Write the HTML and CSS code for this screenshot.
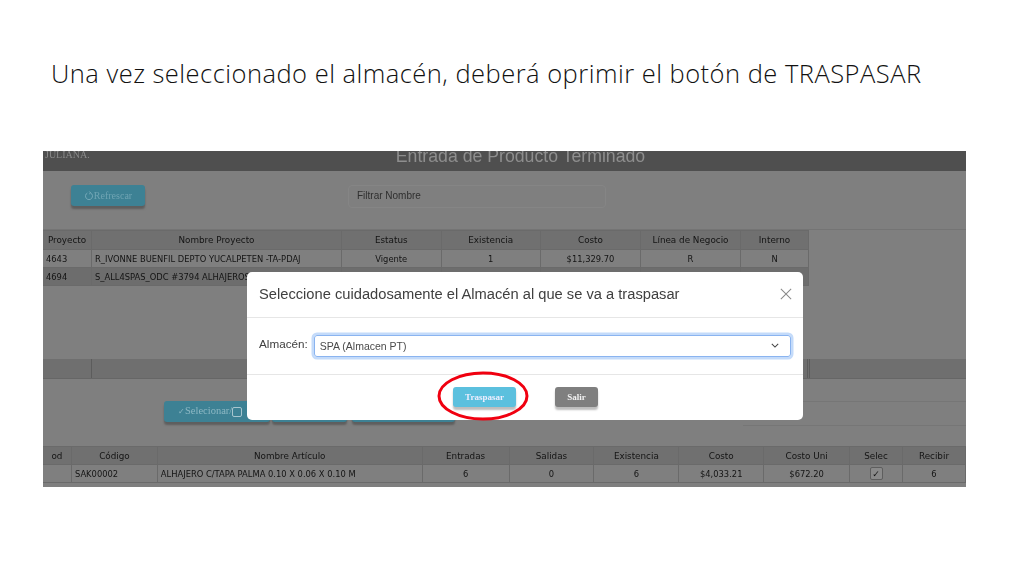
FILE: index.html
```html
<!DOCTYPE html>
<html lang="es">
<head>
<meta charset="utf-8">
<title>Traspasar</title>
<link rel="stylesheet" href="styles.css">
</head>
<body>
<h1 class="slide-title">Una vez seleccionado el almacén, deberá oprimir el botón de TRASPASAR</h1>
<div class="shot">
  <div class="app">
    <header class="app-head">
      <span class="logo">JULIANA.</span>
      <span class="app-title">Entrada de Producto Terminado</span>
    </header>
    <div class="toolbar">
      <span class="btn btn-refresh"><svg class="refresh-icon" viewBox="0 0 12 12"><path d="M8 2.4a4.2 4.2 0 1 1-4 0M6.4 .6L8 2.4 6.2 3.6"/></svg>Refrescar</span>
      <span class="filter">Filtrar Nombre</span>
    </div>
    <table class="grid grid-top">
      <thead>
        <tr><th class="c1">Proyecto</th><th class="c2">Nombre Proyecto</th><th class="c3">Estatus</th><th class="c3">Existencia</th><th class="c4">Costo</th><th class="c4">Línea de Negocio</th><th class="c5">Interno</th></tr>
      </thead>
      <tbody>
        <tr><td>4643</td><td>R_IVONNE BUENFIL DEPTO YUCALPETEN -TA-PDAJ</td><td class="mid">Vigente</td><td class="mid">1</td><td class="mid">$11,329.70</td><td class="mid">R</td><td class="mid">N</td></tr>
        <tr class="picked"><td>4694</td><td>S_ALL4SPAS_ODC #3794 ALHAJEROS</td><td class="mid">Vigente</td><td class="mid">6</td><td class="mid">$4,033.21</td><td class="mid">S</td><td class="mid">N</td></tr>
      </tbody>
    </table>
    <div class="band"><span class="band-a"></span><span class="band-b"></span><span class="band-c"></span></div>
    <div class="actions">
      <span class="btn btn-sel"><span class="tick">✓</span>Selecionar/<span class="box"></span></span>
      <span class="btn btn-alt"></span>
      <span class="btn btn-alt2"></span>
    </div>
    <table class="grid grid-low">
      <thead>
        <tr><th class="d1">od</th><th class="d2">Código</th><th class="d3">Nombre Artículo</th><th class="d4">Entradas</th><th class="d5">Salidas</th><th class="d5">Existencia</th><th class="d5">Costo</th><th class="d6">Costo Uni</th><th class="d7">Selec</th><th class="d8">Recibir</th></tr>
      </thead>
      <tbody>
        <tr><td></td><td>SAK00002</td><td>ALHAJERO C/TAPA PALMA 0.10 X 0.06 X 0.10 M</td><td class="mid">6</td><td class="mid">0</td><td class="mid">6</td><td class="mid">$4,033.21</td><td class="mid">$672.20</td><td class="mid"><span class="check">✓</span></td><td class="mid">6</td></tr>
      </tbody>
    </table>
  </div>
  <div class="modal">
    <div class="modal-head">
      <span class="modal-title">Seleccione cuidadosamente el Almacén al que se va a traspasar</span>
      <svg class="close" viewBox="0 0 14 14"><path d="M1 1l12 12M13 1L1 13"/></svg>
    </div>
    <div class="modal-body">
      <span class="field-label">Almacén:</span>
      <div class="select">
        <span>SPA (Almacen PT)</span>
        <svg class="chev" viewBox="0 0 10 6"><path d="M1 1l4 4 4-4"/></svg>
      </div>
    </div>
    <div class="modal-foot">
      <span class="btn btn-go">Traspasar</span>
      <span class="btn btn-exit">Salir</span>
    </div>
    <svg class="ring" viewBox="0 0 92 50"><ellipse cx="46" cy="25" rx="44" ry="23"/></svg>
  </div>
</div>
</body>
</html>
```
FILE: styles.css
```css
* { box-sizing: border-box; }
html, body { margin: 0; background: #fff; }
body { width: 1024px; height: 576px; overflow: hidden; padding: 55px 0 0 51px; }

.slide-title {
  margin: 0;
  font: 300 25.5px/36px "Open Sans", sans-serif;
  letter-spacing: .48px;
  color: #111;
  white-space: nowrap;
}

.shot {
  position: relative;
  width: 923px;
  height: 336px;
  margin: 60px 0 0 -8px;
  overflow: hidden;
  background: #7f7f7f;
  filter: blur(.4px);
}
.app { font-family: "DejaVu Sans", Verdana, sans-serif; color: #141414; }

.app-head {
  height: 20px;
  background: #4f4f4f;
  display: flex;
  justify-content: center;
  position: relative;
  overflow: hidden;
}
.logo {
  position: absolute;
  left: 2px;
  top: -2px;
  font: 10px/12px "Liberation Serif", serif;
  color: #8a8a8a;
}
.app-title {
  font: 17.7px/20px "Liberation Sans", Arial, sans-serif;
  color: #8e8e8e;
  margin: -5px 0 0 32px;
}

.toolbar {
  height: 59px;
  display: flex;
  align-items: flex-start;
  padding: 14px 0 0 28px;
  border-bottom: 1px solid #747474;
}
.btn {
  display: flex;
  align-items: center;
  justify-content: center;
  font: 700 9px/1 "Liberation Serif", serif;
  border-radius: 3px;
}
.btn-refresh {
  width: 74px;
  height: 21px;
  background: #3d8194;
  color: #6fa4b3;
  box-shadow: 0 3px 2px #5e5e5e;
  font-weight: 400;
  font-size: 10px;
}
.refresh-icon { width: 10px; height: 10px; fill: none; stroke: #7fb0be; stroke-width: 1; }
.filter {
  width: 258px;
  height: 23px;
  margin-left: 203px;
  padding: 0 8px;
  border: 1px solid #858585;
  border-radius: 4px;
  font: 10px/20px "Liberation Sans", Arial, sans-serif;
  color: #2f2f2f;
}

.grid { border-collapse: collapse; table-layout: fixed; font-size: 8.35px; margin-left: -1px; }
.grid th, .grid td { border: 1px solid #6a6a6a; padding: 0 3px; white-space: nowrap; overflow: hidden; }
.grid th { font-weight: 400; font-size: 8.8px; background: #707070; text-align: center; }
.grid td { background: #7f7f7f; }
.grid td.mid { text-align: center; }
.grid-top th { height: 19px; }
.grid-top td { height: 18px; }
.grid-top .picked td { background: #6d6d6d; }
.grid-low th { height: 18px; }
.grid-low td { height: 18px; }

.c1 { width: 49px; }
.c2 { width: 250px; }
.c3 { width: 99.5px; }
.c4 { width: 100px; }
.c5 { width: 68px; }
.d1 { width: 29px; }
.d2 { width: 86px; }
.d3 { width: 265px; }
.d4 { width: 87px; }
.d5 { width: 85px; }
.d6 { width: 86px; }
.d7 { width: 53px; }
.d8 { width: 63px; }

.band {
  margin-top: 73px;
  height: 20px;
  display: flex;
  background: #6f6f6f;
  border-bottom: 1px solid #666;
}
.band-a { width: 49px; border-right: 1px solid #5c5c5c; }
.band-b { width: 716px; border-right: 1px solid #5c5c5c; }
.band-c { flex: 1; border-left: 1px solid #5c5c5c; margin-left: 1px; }

.actions {
  position: relative;
  height: 67px;
  display: flex;
  align-items: flex-start;
  padding: 22px 0 0 121px;
  gap: 2px;
}
.actions::after {
  content: "";
  position: absolute;
  left: 700px;
  right: 0;
  top: 22px;
  height: 23px;
  border: solid #767676;
  border-width: 1px 0;
}
.btn-sel {
  width: 106px;
  height: 21px;
  justify-content: flex-start;
  padding-left: 14px;
  background: #3d8194;
  color: #8db8c4;
  font-weight: 400;
  font-size: 10.5px;
  box-shadow: 0 3px 2px #5e5e5e;
}
.tick { font-size: 8px; }
.box { width: 10px; height: 10px; border: 1px solid #a8c6cf; border-radius: 2px; }
.btn-alt, .btn-alt2 { height: 21px; background: #3d8194; box-shadow: 0 3px 2px #5e5e5e; }
.btn-alt { width: 75px; }
.btn-alt2 { width: 103px; margin-left: 3px; }
.check {
  display: inline-block;
  width: 13px;
  height: 13px;
  border: 1px solid #5e5e5e;
  border-radius: 2px;
  background: #8a8a8a;
  font-size: 9px;
  line-height: 12px;
  vertical-align: middle;
}

.modal {
  position: absolute;
  z-index: 2;
  left: 204px;
  top: 121px;
  width: 556px;
  height: 148px;
  background: #fff;
  border-radius: 5px;
  font-family: "Liberation Sans", Arial, sans-serif;
  color: #404040;
  display: flex;
  flex-direction: column;
}
.modal-head {
  height: 46px;
  flex: none;
  display: flex;
  align-items: center;
  justify-content: space-between;
  padding: 0 11px 2px 12px;
  border-bottom: 1px solid #e6e6e6;
}
.modal-title { font-size: 14.7px; }
.close { width: 12px; height: 12px; fill: none; stroke: #8a8a8a; stroke-width: 1.2; }
.modal-body {
  height: 57px;
  flex: none;
  display: flex;
  align-items: center;
  gap: 6px;
  padding: 0 12px;
  border-bottom: 1px solid #e6e6e6;
}
.field-label { font-size: 11.7px; position: relative; top: -3px; }
.select {
  width: 477px;
  height: 22px;
  display: flex;
  align-items: center;
  justify-content: space-between;
  padding: 0 11px 1px 5px;
  border: 1px solid #8ab4f0;
  border-radius: 3px;
  box-shadow: 0 0 0 2.5px #c4dbfa;
  font-size: 10.5px;
  color: #4a4a4a;
}
.chev { width: 8px; height: 5px; fill: none; stroke: #444; stroke-width: 1.3; }
.modal-foot {
  flex: 1;
  display: flex;
  align-items: flex-start;
  padding: 12px 0 0 206px;
}
.btn-go {
  width: 63px;
  height: 20px;
  background: #5bc0de;
  color: #eef;
  box-shadow: 0 3px 2px #bdbdbd;
}
.btn-exit {
  width: 43px;
  height: 20px;
  margin-left: 39px;
  background: #7f7f7f;
  color: #f2f2f2;
  box-shadow: 0 3px 2px #bdbdbd;
}
.ring {
  position: absolute;
  left: 190px;
  top: 99px;
  width: 92px;
  height: 50px;
  fill: none;
  stroke: #f00010;
  stroke-width: 3;
}
```
